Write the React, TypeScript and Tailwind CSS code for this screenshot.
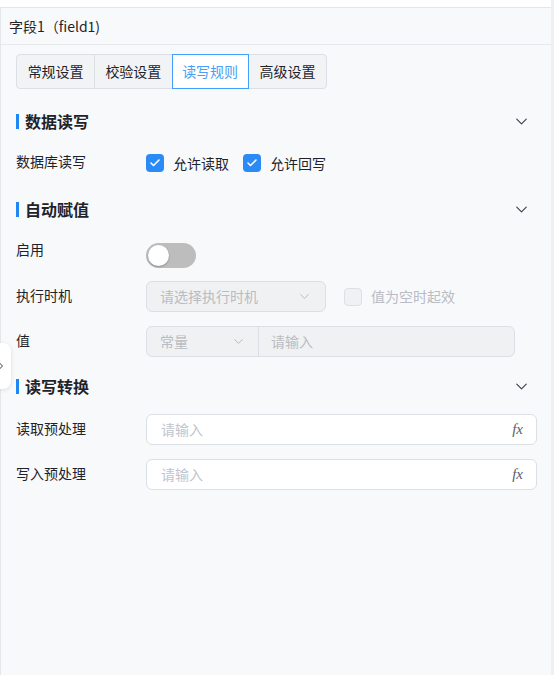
import React from 'react';
import { ChevronDown, ChevronRight, Check } from 'lucide-react';

const font = { fontFamily: '"Noto Sans CJK SC", "Noto Sans", sans-serif' };

const tabs = ['常规设置', '校验设置', '读写规则', '高级设置'];

const SectionHeader: React.FC<{ title: string; className?: string }> = ({ title, className }) => (
  <div className={`flex h-[32px] shrink-0 items-center justify-between pr-[20px] ${className ?? ''}`}>
    <div className="flex items-center">
      <span className="ml-[15px] h-[15px] w-[3px] bg-[#1d87f5]" />
      <span className="ml-[6px] text-[16px] font-bold leading-[32px] text-[#1f2329]">{title}</span>
    </div>
    <ChevronDown className="h-[19px] w-[19px] text-[#3c3f45]" strokeWidth={1.4} />
  </div>
);

const Label: React.FC<{ text: string }> = ({ text }) => (
  <div className="w-[145px] shrink-0 pl-[15px] text-[14px] leading-[32px] text-[#1f2329]">{text}</div>
);

const CheckBox: React.FC<{ checked?: boolean; disabled?: boolean }> = ({ checked, disabled }) =>
  checked ? (
    <span className="flex h-[18px] w-[18px] items-center justify-center rounded-[4px] bg-[#2a8bf6]">
      <Check className="h-[12px] w-[12px] text-white" strokeWidth={3.2} />
    </span>
  ) : (
    <span
      className={`h-[18px] w-[18px] rounded-[4px] border ${disabled ? 'border-[#dcdfe6] bg-[#f0f1f3]' : 'border-[#c9cdd4] bg-white'}`}
    />
  );

const FxInput: React.FC = () => (
  <div className="mt-[2px] flex h-[31px] w-[391px] shrink-0 items-center justify-between rounded-[6px] border border-[#dcdfe6] bg-white pl-[14px] pr-[13px]">
    <span className="text-[14px] text-[#c0c4cc]">请输入</span>
    <span className="text-[15px] italic text-[#5b5e66]" style={{ fontFamily: '"Liberation Serif", serif' }}>
      fx
    </span>
  </div>
);

export default function App() {
  return (
    <div className="relative flex h-[675px] w-[554px] overflow-hidden bg-white" style={font}>
      <div className="mt-[7px] flex flex-1 flex-col border-l border-t border-[#e4e6ea] bg-[#f8f9fb]">
        {/* title */}
        <div className="flex h-[37px] shrink-0 items-center border-b border-[#e6e8eb] pl-[8px] text-[14px] text-[#1f2329]">
          字段1（field1)
        </div>

        {/* tabs */}
        <div className="ml-[15px] mt-[9px] flex h-[35px] w-[311px] shrink-0 rounded-[4px] border border-[#dcdfe6] bg-[#f2f3f5]">
          {tabs.map((t, i) => {
            const active = i === 2;
            return (
              <div
                key={t}
                className={`flex w-[78px] items-center justify-center text-[14px] ${
                  active
                    ? 'relative -my-px border border-[#409eff] bg-white text-[#4a9ff5]'
                    : 'text-[#1f2329]'
                } ${i === 1 ? 'border-l border-[#dcdfe6]' : ''}`}
              >
                {t}
              </div>
            );
          })}
        </div>

        <SectionHeader title="数据读写" className="mt-[16px]" />

        <div className="mt-[8px] flex h-[32px] shrink-0">
          <Label text="数据库读写" />
          <div className="mt-[2px] flex h-[32px] items-center text-[14px] text-[#1f2329]">
            <CheckBox checked />
            <span className="ml-[9px]">允许读取</span>
            <span className="ml-[14px]">
              <CheckBox checked />
            </span>
            <span className="ml-[9px]">允许回写</span>
          </div>
        </div>

        <SectionHeader title="自动赋值" className="mt-[16px]" />

        <div className="mt-[8px] flex h-[32px] shrink-0">
          <Label text="启用" />
          <div className="mt-[10px] flex h-[25px] w-[50px] items-center rounded-full bg-[#bdbdbd] px-[2px]">
            <span className="h-[21px] w-[21px] rounded-full bg-white shadow-[0_1px_2px_rgba(0,0,0,0.25)]" />
          </div>
        </div>

        <div className="mt-[14px] flex h-[32px] shrink-0">
          <Label text="执行时机" />
          <div className="mt-[2px] flex h-[31px] w-[180px] items-center justify-between rounded-[6px] border border-[#dcdfe6] bg-[#f0f1f3] pl-[13px] pr-[13px]">
            <span className="text-[14px] text-[#b9bcc2]">请选择执行时机</span>
            <ChevronDown className="h-[15px] w-[15px] text-[#b4b7bd]" strokeWidth={1.5} />
          </div>
          <div className="ml-[18px] mt-[2px] flex h-[31px] items-center">
            <CheckBox disabled />
            <span className="ml-[9px] text-[14px] text-[#b9bcc2]">值为空时起效</span>
          </div>
        </div>

        <div className="mt-[13px] flex h-[32px] shrink-0">
          <Label text="值" />
          <div className="mt-[2px] flex h-[31px] w-[369px] rounded-[6px] border border-[#dcdfe6] bg-[#f0f1f3]">
            <div className="flex w-[112px] items-center justify-between border-r border-[#dcdfe6] pl-[13px] pr-[12px]">
              <span className="text-[14px] text-[#b9bcc2]">常量</span>
              <ChevronDown className="h-[15px] w-[15px] text-[#b4b7bd]" strokeWidth={1.5} />
            </div>
            <div className="flex items-center pl-[12px] text-[14px] text-[#b9bcc2]">请输入</div>
          </div>
        </div>

        <SectionHeader title="读写转换" className="mt-[14px]" />

        <div className="mt-[10px] flex h-[32px] shrink-0">
          <Label text="读取预处理" />
          <FxInput />
        </div>

        <div className="mt-[13px] flex h-[32px] shrink-0">
          <Label text="写入预处理" />
          <FxInput />
        </div>
      </div>

      {/* scrollbar track */}
      <div className="w-[3px] bg-[#eeeff1]" />

      {/* collapse handle */}
      <div className="absolute left-0 top-[343px] flex h-[46px] w-[11px] items-center overflow-hidden rounded-r-[8px] bg-white shadow-[0_1px_4px_rgba(0,0,0,0.12)]">
        <ChevronRight className="-ml-[5px] h-[12px] w-[12px] text-[#3c3f45]" strokeWidth={2} />
      </div>
    </div>
  );
}
